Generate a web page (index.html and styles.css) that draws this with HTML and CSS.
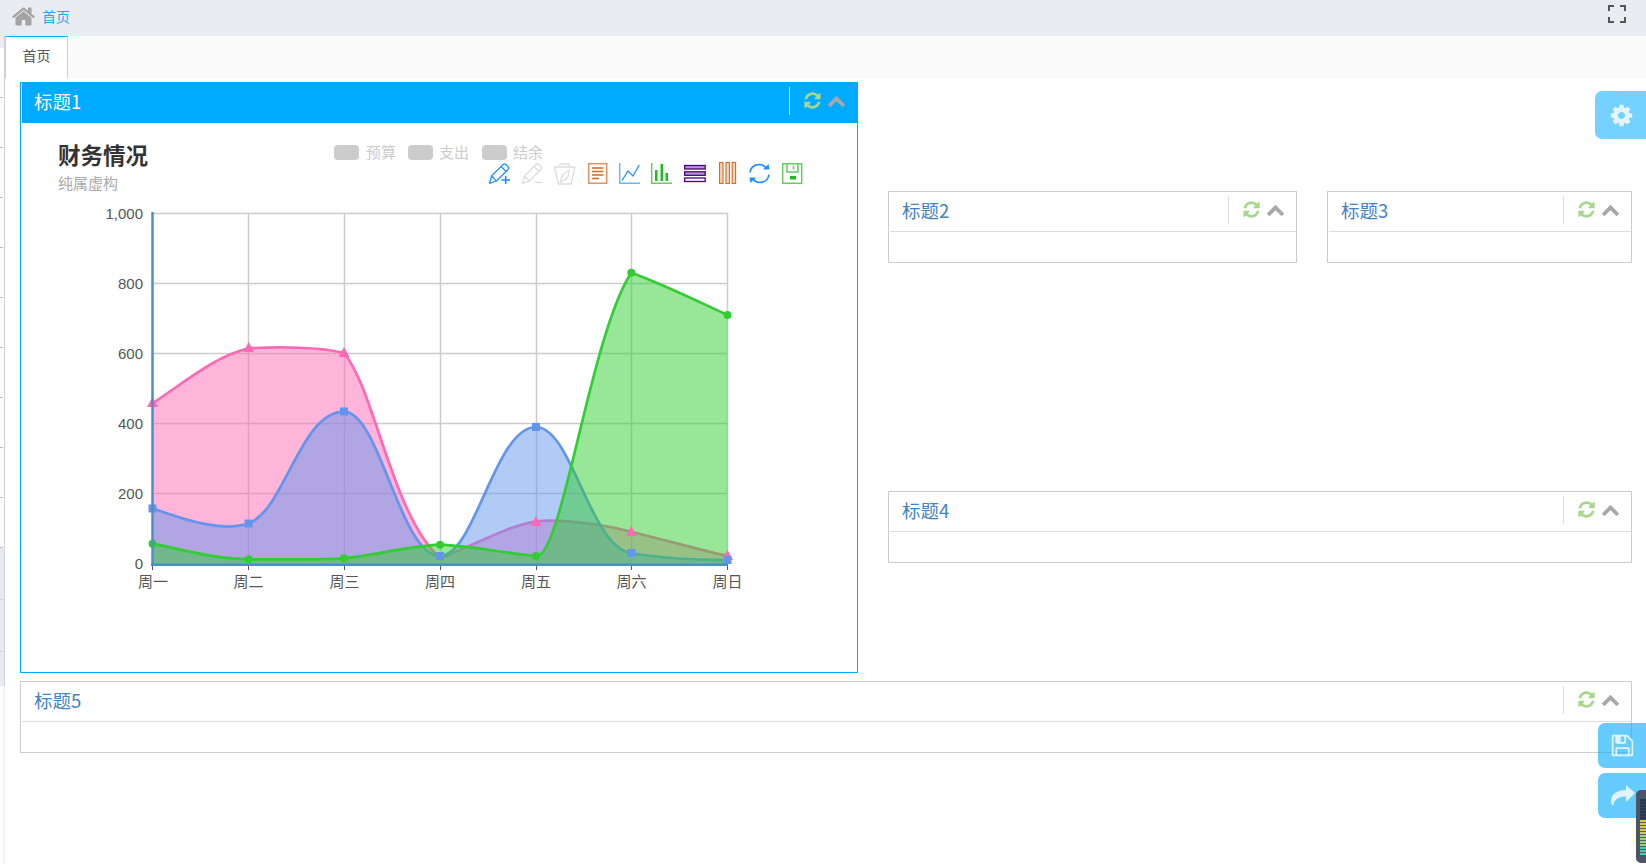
FILE: index.html
```html
<!DOCTYPE html>
<html lang="zh-CN">
<head>
  <meta charset="UTF-8">
  <title>首页</title>
  <link rel="stylesheet" href="styles.css">
</head>
<body>

<!-- sidebar sliver left of the page -->
<div class="strip">
  <div class="strip-top"></div>
  <div class="strip-ticks"></div>
  <div class="strip-menu"></div>
  <div class="strip-rest"></div>
</div>

<div class="page">
  <header class="topbar">
    <svg class="home-icon" viewBox="0 0 1792 1792"><path d="M1472 992v480q0 26-19 45t-45 19h-384v-384h-256v384h-384q-26 0-45-19t-19-45v-480q0-1 .5-3t.5-3l575-474 575 474q1 2 1 6zm223-69l-62 74q-8 9-21 11h-3q-13 0-21-7l-692-577-692 577q-12 8-24 7-13-2-21-11l-62-74q-8-10-7-23.500t11-21.500l719-599q32-26 76-26t76 26l244 204v-195q0-14 9-23t23-9h192q14 0 23 9t9 23v408l219 182q10 8 11 21.500t-7 23.500z"/></svg>
    <a class="crumb">首页</a>
    <svg class="full-icon" viewBox="0 0 18 18"><path d="M1 6V1H6M12 1H17V6M17 12V17H12M6 17H1V12"/></svg>
  </header>

  <nav class="tabs">
    <a class="tab">首页</a>
  </nav>

  <main class="content">
    <div class="row-top">
      <section class="panel panel-active">
        <div class="panel-head">
          <span class="panel-title">标题1</span>
          <div class="panel-tools">
            <svg class="tool-refresh" viewBox="0 0 1792 1792"><path d="M1639 1056q0 5-1 7-64 268-268 434.500t-478 166.500q-146 0-282.500-55t-243.500-157l-129 129q-19 19-45 19t-45-19-19-45v-448q0-26 19-45t45-19h448q26 0 45 19t19 45-19 45l-137 137q71 66 161 102t187 36q134 0 250-65t186-179q11-17 53-117 8-23 30-23h192q13 0 22.500 9.500t9.500 22.500zm25-800v448q0 26-19 45t-45 19h-448q-26 0-45-19t-19-45 19-45l138-138q-148-137-349-137-134 0-250 65t-186 179q-11 17-53 117-8 23-30 23h-199q-13 0-22.500-9.500t-9.500-22.500v-7q65-268 270-434.500t480-166.500q146 0 284 55.500t245 156.500l130-129q19-19 45-19t45 19 19 45z"/></svg>
            <svg class="tool-up" viewBox="0 0 1792 1792"><path d="M1683 1331l-166 165q-19 19-45 19t-45-19l-531-531-531 531q-19 19-45 19t-45-19l-166-165q-19-19-19-45.500t19-45.500l742-741q19-19 45-19t45 19l742 741q19 19 19 45.500t-19 45.500z"/></svg>
          </div>
        </div>
        <div class="chart-body">
          <!-- viewBox uses page coordinates, so the chart reads like the canvas it replaces -->
          <svg class="chart" viewBox="21 123 836 549">
            <text class="chart-title" x="58" y="164">财务情况</text>
            <text class="chart-sub" x="58" y="189">纯属虚构</text>

            <rect class="legend-key" x="334" y="145" width="25" height="15" rx="4"/>
            <text class="legend-label" x="366" y="158">预算</text>
            <rect class="legend-key" x="408" y="145" width="25" height="15" rx="4"/>
            <text class="legend-label" x="439" y="158">支出</text>
            <rect class="legend-key" x="482" y="145" width="25" height="15" rx="4"/>
            <text class="legend-label" x="513" y="158">结余</text>

            <!-- toolbox -->
            <g class="ico ico-blue" transform="translate(489 163)">
              <path d="M.7 20.300L2.500 13 14 1.500Q15.500.3 17 1.500L19 3.500Q20.300 5 19 6.500L7.500 18ZM12 3.500L17 8.500M2.500 13L7.500 18"/>
              <path class="ico-plus" d="M12.500 17H21M16.700 13V21"/>
            </g>
            <g class="ico ico-off" transform="translate(522 163)">
              <path d="M.7 20.300L2.500 13 14 1.500Q15.500.3 17 1.500L19 3.500Q20.300 5 19 6.500L7.500 18ZM12 3.500L17 8.500M2.500 13L7.500 18"/>
              <path d="M13 19.500H20"/>
            </g>
            <g class="ico ico-off" transform="translate(554 163)">
              <path d="M6 3V1H15V3M.5 4H21L17 21H4.500Z"/>
              <path d="M6.500 19Q7 11 15 7.500Q15.500 15 9 18Z"/>
            </g>
            <g transform="translate(588 163)">
              <rect class="ico-box-orange" x=".7" y=".7" width="18" height="19.500"/>
              <path class="ico-lines-orange" d="M4 5H15.500M4 8.500H15.500M4 12H15.500M4 15.500H11"/>
            </g>
            <g transform="translate(619 163)">
              <path class="ico-axis-blue" d="M.7 0V20.300H21"/>
              <path class="ico-stroke-blue" d="M3 17.500L9 8 14 13 20.300 2"/>
            </g>
            <g transform="translate(651 163)">
              <path class="ico-axis-green" d="M.7 0V20.300H21"/>
              <path class="ico-bars-green" d="M4 7H6.500V18H4ZM9.500 1H12V18H9.500ZM14.500 10H17V18H14.500Z"/>
            </g>
            <g class="ico-stack" transform="translate(684 165)">
              <rect x=".7" y=".5" width="20.500" height="3.500" class="ico-fill-purple"/>
              <rect x=".7" y="6.800" width="20.500" height="3.500" class="ico-fill-purple"/>
              <rect x=".7" y="13" width="20.500" height="3.500"/>
            </g>
            <g class="ico-tiled" transform="translate(719 162)">
              <rect x=".6" y=".5" width="3.400" height="21"/>
              <rect x="7" y=".5" width="3.400" height="21"/>
              <rect x="13.200" y=".5" width="3.400" height="21"/>
            </g>
            <g transform="translate(748 163)">
              <path class="ico-stroke-blue ico-thick" d="M2 9.500A9 9 0 0 1 18 5M21 11.500A9 9 0 0 1 5 16"/>
              <path class="ico-arrow-blue" d="M15 6.500L21.500 6.500 20.500 1ZM8 14.500L1.500 14.500 2.500 20Z"/>
            </g>
            <g transform="translate(782 163)">
              <path class="ico-axis-green" d="M.7.7H19.700V20.300H.7ZM5 .7V9H16V.7M11.500 2.500V6.500"/>
              <rect class="ico-bars-green" x="8" y="13" width="6" height="3.500"/>
            </g>

            <!-- grid -->
            <path class="grid" d="M152 213.500H727.500M152 283.500H727M152 353.500H727M152 423.500H727M152 493.500H727M248.500 213V564M344.500 213V564M440.500 213V564M536.500 213V564M631.500 213V564M727.500 213V564"/>

            <!-- areas: budget, spend, balance -->
            <path class="area area-pink" d="M152.500 403.300C185 382 215 356 248.700 348.300C280 346.500 320 347 344 353C375 390 392 515 440 558C470 548 505 526 536 521.700C555 518 600 524 631.300 531.700C665 540 700 550 727.500 556V564.500H152.500Z"/>
            <path class="line line-pink" d="M152.500 403.300C185 382 215 356 248.700 348.300C280 346.500 320 347 344 353C375 390 392 515 440 558C470 548 505 526 536 521.700C555 518 600 524 631.300 531.700C665 540 700 550 727.500 556"/>

            <path class="area area-blue" d="M152.500 508.300C190 522 225 532 248.700 523.300C285 510 300 412 344 411.700C380 412 400 556 440 556C475 556 495 427 536 427C572 427 590 548 631.300 553C660 558 700 560 727.500 560V564.500H152.500Z"/>
            <path class="line line-blue" d="M152.500 508.300C190 522 225 532 248.700 523.300C285 510 300 412 344 411.700C380 412 400 556 440 556C475 556 495 427 536 427C572 427 590 548 631.300 553C660 558 700 560 727.500 560"/>

            <path class="area area-green" d="M152.500 543.700C185 550 215 559 248.700 559.300C280 559.500 315 560 344 558.300C375 555 410 546 440 544.700C470 546 505 553 536 556C562 560 590 335 631.300 272.700C665 285 695 300 727.500 315V564.500H152.500Z"/>
            <path class="line line-green" d="M152.500 543.700C185 550 215 559 248.700 559.300C280 559.500 315 560 344 558.300C375 555 410 546 440 544.700C470 546 505 553 536 556C562 560 590 335 631.300 272.700C665 285 695 300 727.500 315"/>

            <!-- markers -->
            <g class="marks-pink">
              <path d="M152.500 397L158 407H147Z"/><path d="M248.700 342L254 352H243.500Z"/><path d="M344 347L349.500 357H338.500Z"/>
              <path d="M536 516L541.500 526H530.500Z"/><path d="M631.300 526L636.500 536H626Z"/><path d="M727.500 550L733 560H722Z"/>
            </g>
            <g class="marks-blue">
              <rect x="148.500" y="504.500" width="8" height="8"/><rect x="244.500" y="519.500" width="8" height="8"/><rect x="340" y="407.500" width="8" height="8"/>
              <rect x="436" y="552" width="8" height="8"/><rect x="532" y="423" width="8" height="8"/><rect x="627.500" y="549" width="8" height="8"/><rect x="723.500" y="556" width="8" height="8"/>
            </g>
            <g class="marks-green">
              <circle cx="152.500" cy="543.700" r="4"/><circle cx="248.700" cy="559.300" r="4"/><circle cx="344" cy="558.300" r="4"/>
              <circle cx="440" cy="544.700" r="4"/><circle cx="536" cy="556" r="4"/><circle cx="631.300" cy="272.700" r="4"/><circle cx="727.500" cy="315" r="4"/>
            </g>

            <!-- axes -->
            <path class="axis" d="M152.500 212V565.500M151 564.800H728"/>
            <path class="axis-tick" d="M152.500 566V570M248.500 566V570M344.500 566V570M440.500 566V570M536.500 566V570M631.500 566V570M727.500 566V570"/>

            <g class="y-labels">
              <text x="143" y="219">1,000</text>
              <text x="143" y="289">800</text>
              <text x="143" y="359">600</text>
              <text x="143" y="429">400</text>
              <text x="143" y="499">200</text>
              <text x="143" y="569">0</text>
            </g>
            <g class="x-labels">
              <text x="153" y="587">周一</text>
              <text x="248.500" y="587">周二</text>
              <text x="344.500" y="587">周三</text>
              <text x="440" y="587">周四</text>
              <text x="536" y="587">周五</text>
              <text x="631.500" y="587">周六</text>
              <text x="727.500" y="587">周日</text>
            </g>
          </svg>
        </div>
      </section>

      <div class="col-right">
        <div class="row-pair">
          <section class="panel panel-wide">
            <div class="panel-head">
              <span class="panel-title">标题2</span>
              <div class="panel-tools">
                <svg class="tool-refresh" viewBox="0 0 1792 1792"><path d="M1639 1056q0 5-1 7-64 268-268 434.500t-478 166.500q-146 0-282.500-55t-243.500-157l-129 129q-19 19-45 19t-45-19-19-45v-448q0-26 19-45t45-19h448q26 0 45 19t19 45-19 45l-137 137q71 66 161 102t187 36q134 0 250-65t186-179q11-17 53-117 8-23 30-23h192q13 0 22.500 9.500t9.500 22.500zm25-800v448q0 26-19 45t-45 19h-448q-26 0-45-19t-19-45 19-45l138-138q-148-137-349-137-134 0-250 65t-186 179q-11 17-53 117-8 23-30 23h-199q-13 0-22.500-9.500t-9.500-22.500v-7q65-268 270-434.500t480-166.500q146 0 284 55.500t245 156.500l130-129q19-19 45-19t45 19 19 45z"/></svg>
                <svg class="tool-up" viewBox="0 0 1792 1792"><path d="M1683 1331l-166 165q-19 19-45 19t-45-19l-531-531-531 531q-19 19-45 19t-45-19l-166-165q-19-19-19-45.500t19-45.500l742-741q19-19 45-19t45 19l742 741q19 19 19 45.500t-19 45.500z"/></svg>
              </div>
            </div>
            <div class="panel-body"></div>
          </section>
          <section class="panel panel-narrow">
            <div class="panel-head">
              <span class="panel-title">标题3</span>
              <div class="panel-tools">
                <svg class="tool-refresh" viewBox="0 0 1792 1792"><path d="M1639 1056q0 5-1 7-64 268-268 434.500t-478 166.500q-146 0-282.500-55t-243.500-157l-129 129q-19 19-45 19t-45-19-19-45v-448q0-26 19-45t45-19h448q26 0 45 19t19 45-19 45l-137 137q71 66 161 102t187 36q134 0 250-65t186-179q11-17 53-117 8-23 30-23h192q13 0 22.500 9.500t9.500 22.500zm25-800v448q0 26-19 45t-45 19h-448q-26 0-45-19t-19-45 19-45l138-138q-148-137-349-137-134 0-250 65t-186 179q-11 17-53 117-8 23-30 23h-199q-13 0-22.500-9.500t-9.500-22.500v-7q65-268 270-434.500t480-166.500q146 0 284 55.500t245 156.500l130-129q19-19 45-19t45 19 19 45z"/></svg>
                <svg class="tool-up" viewBox="0 0 1792 1792"><path d="M1683 1331l-166 165q-19 19-45 19t-45-19l-531-531-531 531q-19 19-45 19t-45-19l-166-165q-19-19-19-45.500t19-45.500l742-741q19-19 45-19t45 19l742 741q19 19 19 45.500t-19 45.500z"/></svg>
              </div>
            </div>
            <div class="panel-body"></div>
          </section>
        </div>
        <section class="panel panel-four">
          <div class="panel-head">
            <span class="panel-title">标题4</span>
            <div class="panel-tools">
              <svg class="tool-refresh" viewBox="0 0 1792 1792"><path d="M1639 1056q0 5-1 7-64 268-268 434.500t-478 166.500q-146 0-282.500-55t-243.500-157l-129 129q-19 19-45 19t-45-19-19-45v-448q0-26 19-45t45-19h448q26 0 45 19t19 45-19 45l-137 137q71 66 161 102t187 36q134 0 250-65t186-179q11-17 53-117 8-23 30-23h192q13 0 22.500 9.500t9.500 22.500zm25-800v448q0 26-19 45t-45 19h-448q-26 0-45-19t-19-45 19-45l138-138q-148-137-349-137-134 0-250 65t-186 179q-11 17-53 117-8 23-30 23h-199q-13 0-22.500-9.500t-9.500-22.500v-7q65-268 270-434.500t480-166.500q146 0 284 55.500t245 156.500l130-129q19-19 45-19t45 19 19 45z"/></svg>
              <svg class="tool-up" viewBox="0 0 1792 1792"><path d="M1683 1331l-166 165q-19 19-45 19t-45-19l-531-531-531 531q-19 19-45 19t-45-19l-166-165q-19-19-19-45.500t19-45.500l742-741q19-19 45-19t45 19l742 741q19 19 19 45.500t-19 45.500z"/></svg>
            </div>
          </div>
          <div class="panel-body"></div>
        </section>
      </div>
    </div>

    <section class="panel panel-five">
      <div class="panel-head">
        <span class="panel-title">标题5</span>
        <div class="panel-tools">
          <svg class="tool-refresh" viewBox="0 0 1792 1792"><path d="M1639 1056q0 5-1 7-64 268-268 434.500t-478 166.500q-146 0-282.500-55t-243.500-157l-129 129q-19 19-45 19t-45-19-19-45v-448q0-26 19-45t45-19h448q26 0 45 19t19 45-19 45l-137 137q71 66 161 102t187 36q134 0 250-65t186-179q11-17 53-117 8-23 30-23h192q13 0 22.500 9.500t9.500 22.500zm25-800v448q0 26-19 45t-45 19h-448q-26 0-45-19t-19-45 19-45l138-138q-148-137-349-137-134 0-250 65t-186 179q-11 17-53 117-8 23-30 23h-199q-13 0-22.500-9.500t-9.500-22.500v-7q65-268 270-434.500t480-166.500q146 0 284 55.500t245 156.500l130-129q19-19 45-19t45 19 19 45z"/></svg>
          <svg class="tool-up" viewBox="0 0 1792 1792"><path d="M1683 1331l-166 165q-19 19-45 19t-45-19l-531-531-531 531q-19 19-45 19t-45-19l-166-165q-19-19-19-45.500t19-45.500l742-741q19-19 45-19t45 19l742 741q19 19 19 45.500t-19 45.500z"/></svg>
        </div>
      </div>
      <div class="panel-body"></div>
    </section>
  </main>
</div>

<!-- floating buttons on the right edge -->
<button class="float-btn float-settings">
  <svg viewBox="0 0 1792 1792"><path d="M1152 896q0-106-75-181t-181-75-181 75-75 181 75 181 181 75 181-75 75-181zm512-109v222q0 12-8 23t-20 13l-185 28q-19 54-39 91 35 50 107 138 10 12 10 25t-9 23q-27 37-99 108t-94 71q-12 0-26-9l-138-108q-44 23-91 38-16 136-29 186-7 28-36 28h-222q-14 0-24.500-8.500t-11.500-21.500l-28-184q-49-16-90-37l-141 107q-10 9-25 9-14 0-25-11-126-114-165-168-7-10-7-23 0-12 8-23 15-21 51-66.500t54-70.500q-27-50-41-99l-183-27q-13-2-21-12.500t-8-23.500v-222q0-12 8-23t19-13l186-28q14-46 39-92-40-57-107-138-10-12-10-24 0-10 9-23 26-36 98.500-107.500t94.500-71.500q13 0 26 10l138 107q44-23 91-38 16-136 29-186 7-28 36-28h222q14 0 24.500 8.500t11.500 21.500l28 184q49 16 90 37l142-107q9-9 24-9 13 0 25 10 129 119 165 170 7 8 7 22 0 12-8 23-15 21-51 66.500t-54 70.500q26 50 41 98l183 28q13 2 21 12.500t8 23.500z"/></svg>
</button>
<button class="float-btn float-save">
  <svg viewBox="0 0 1792 1792"><path d="M512 1536h768v-384h-768v384zm896 0h128v-896q0-14-10-38.500t-20-34.500l-281-281q-10-10-34-20t-39-10v416q0 40-28 68t-68 28h-576q-40 0-68-28t-28-68v-416h-128v1280h128v-416q0-40 28-68t68-28h832q40 0 68 28t28 68v416zm-384-928v-320q0-13-9.500-22.500t-22.500-9.500h-192q-13 0-22.500 9.500t-9.500 22.500v320q0 13 9.500 22.500t22.500 9.500h192q13 0 22.500-9.500t9.500-22.500zm640 32v928q0 40-28 68t-68 28h-1344q-40 0-68-28t-28-68v-1344q0-40 28-68t68-28h928q40 0 88 20t76 48l280 280q28 28 48 76t20 88z"/></svg>
</button>
<button class="float-btn float-share">
  <svg viewBox="0 0 24 21"><path d="M24 8L15 0V5C6 5 0 9 0 16C0 18 1 20 2 21C3 15 6 12 15 11.500V17Z"/></svg>
</button>

<!-- dark widget cut off by the corner of the window -->
<div class="corner-widget"><div class="corner-meter"></div></div>

</body>
</html>
```

FILE: styles.css
```css
* {
  margin: 0;
  padding: 0;
  box-sizing: border-box;
}
body {
  display: flex;
  height: 100vh;
  overflow: hidden;
  background: #fff;
  font-family: "Noto Sans CJK SC", "Liberation Sans", sans-serif;
}

/* Sidebar sliver */
.strip {
  width: 5px;
  flex: none;
  display: flex;
  flex-direction: column;
}
.strip-top {
  height: 48px;
  background: #e9edf2;
  border-right: 1px solid #ccd2d8;
}
.strip-ticks {
  height: 500px;
  border-right: 1px solid #ccd2d8;
  background: repeating-linear-gradient(to bottom, transparent 0, transparent 49px, #bbb 49px, #bbb 50px) no-repeat 0 0 / 3px 100%;
}
.strip-menu {
  height: 138px;
  border-right: 1px solid #ccd2d8;
  background: repeating-linear-gradient(to bottom, #e6eaee 0, #e6eaee 51px, #d2d6da 51px, #d2d6da 52px);
}
.strip-rest {
  flex: 1;
  margin-left: 3px;
  background: #eef3f7;
}

.page {
  flex: 1;
  min-width: 0;
}

/* Top bar */
.topbar {
  height: 36px;
  margin-left: -1px;
  background: #e9edf2;
  display: flex;
  align-items: center;
  padding: 0 0 4px 7px;
}
.home-icon {
  width: 25px;
  height: 25px;
  fill: #a3a3a3;
}
.crumb {
  margin-left: 6px;
  font-size: 14px;
  color: #1ea7f5;
}
.full-icon {
  width: 18px;
  height: 18px;
  margin-left: auto;
  margin-right: 20px;
  margin-bottom: 4px;
  fill: none;
  stroke: #555;
  stroke-width: 2;
}

/* Tabs */
.tabs {
  height: 42px;
  background: #fafafa;
  display: flex;
}
.tab {
  width: 63px;
  border: 1px solid #c5d0dc;
  border-top-color: #00aaff;
  border-bottom: 0;
  background: #fff;
  color: #555;
  font-size: 14px;
  line-height: 36px;
  text-align: center;
}

/* Panels */
.content {
  padding: 4px 14px 0 15px;
}
.row-top {
  display: grid;
  grid-template-columns: 838px 1fr;
  column-gap: 30px;
}
.col-right {
  padding-top: 109px;
}
.row-pair {
  display: flex;
  gap: 30px;
}
.panel {
  border: 1px solid #ccc;
  background: #fff;
}
.panel-wide {
  width: 409px;
}
.panel-narrow {
  flex: 1;
}
.panel-four {
  margin-top: 228px;
}
.panel-five {
  margin-top: 8px;
}
.panel-head {
  height: 40px;
  margin-left: 1px;
  border-bottom: 1px solid #ddd;
  display: flex;
  justify-content: space-between;
  align-items: flex-start;
}
.panel-title {
  padding-left: 12px;
  font-size: 18.500px;
  line-height: 36px;
  color: #4584c0;
}
.panel-tools {
  width: 68px;
  height: 28px;
  margin-top: 4px;
  border-left: 1px solid #ddd;
  display: flex;
  align-items: flex-start;
  gap: 5px;
  padding: 4px 0 0 13px;
}
.tool-refresh {
  width: 19px;
  height: 19px;
  fill: #a9d68f;
}
.tool-up {
  width: 19px;
  height: 19px;
  fill: #a8a8a8;
}
.panel-body {
  height: 30px;
}

/* Active panel */
.panel-active {
  border-color: #00aaff;
  height: 591px;
}
.panel-active .panel-head {
  background: #00aaff;
  border-bottom-color: #00aaff;
}
.panel-active .panel-title {
  color: #fff;
}
.panel-active .panel-tools {
  border-left-color: #cfeeff;
}
.chart-body {
  height: 549px;
}
.chart {
  display: block;
  width: 836px;
  height: 549px;
}

/* Chart text */
.chart-title {
  font-size: 22.500px;
  font-weight: 700;
  fill: #333;
}
.chart-sub {
  font-size: 15px;
  fill: #aaa;
}
.legend-key {
  fill: #ccc;
}
.legend-label {
  font-size: 15px;
  fill: #ccc;
}
.y-labels text {
  font-family: "Liberation Sans", sans-serif;
  font-size: 15px;
  fill: #555;
  text-anchor: end;
}
.x-labels text {
  font-size: 15px;
  fill: #555;
  text-anchor: middle;
}

/* Chart lines */
.grid {
  fill: none;
  stroke: #ccc;
  stroke-width: 1.500;
}
.axis {
  fill: none;
  stroke: #4a90c8;
  stroke-width: 2.500;
}
.axis-tick {
  fill: none;
  stroke: #555;
  stroke-width: 1;
}
.area {
  stroke: none;
  opacity: .5;
}
.area-pink { fill: #ff69b4; }
.area-blue { fill: #6495ed; }
.area-green { fill: #32cd32; }
.line {
  fill: none;
  stroke-width: 2.700;
}
.line-pink { stroke: #ff69b4; }
.line-blue { stroke: #6495ed; }
.line-green { stroke: #32cd32; }
.marks-pink { fill: #ff69b4; }
.marks-blue { fill: #6495ed; }
.marks-green { fill: #32cd32; }

/* Toolbox icons */
.ico path {
  fill: none;
  stroke-width: 1.300;
}
.ico-blue path { stroke: #1e90ff; }
.ico-blue .ico-plus { stroke-width: 1.600; }
.ico-off path { stroke: #ddd; }
.ico-box-orange {
  fill: none;
  stroke: #e39060;
  stroke-width: 1.500;
}
.ico-lines-orange {
  fill: none;
  stroke: #d2691e;
  stroke-width: 1.300;
}
.ico-axis-blue {
  fill: none;
  stroke: #6fb4fb;
  stroke-width: 1.500;
}
.ico-stroke-blue {
  fill: none;
  stroke: #1e90ff;
  stroke-width: 1.300;
}
.ico-thick {
  stroke-width: 1.700;
}
.ico-arrow-blue {
  fill: #1e90ff;
}
.ico-axis-green {
  fill: none;
  stroke: #66cc66;
  stroke-width: 1.500;
}
.ico-bars-green {
  fill: #22bb22;
}
.ico-stack rect {
  fill: #fff;
  stroke: #4b0082;
  stroke-width: 1.300;
}
.ico-stack .ico-fill-purple {
  fill: #b39ad0;
}
.ico-tiled rect {
  fill: #f7d9c2;
  stroke: #d2691e;
  stroke-width: 1.100;
}

/* Floating buttons */
.float-btn {
  position: fixed;
  right: 0;
  border: none;
  border-radius: 7px 0 0 7px;
  background: rgba(0, 170, 255, .6);
  display: flex;
  align-items: center;
}
.float-btn svg {
  fill: rgba(255, 255, 255, .8);
}
.float-settings {
  top: 91px;
  width: 51px;
  height: 48px;
  background: rgba(0, 170, 255, .54);
  padding-left: 14px;
}
.float-settings svg {
  width: 25px;
  height: 25px;
}
.float-save {
  top: 723px;
  width: 48px;
  height: 45px;
  padding-left: 12px;
}
.float-save svg {
  width: 25px;
  height: 25px;
}
.float-share {
  top: 773px;
  width: 48px;
  height: 45px;
  padding-left: 13px;
}
.float-share svg {
  width: 24px;
  height: 21px;
}

/* Corner widget */
.corner-widget {
  position: fixed;
  right: 0;
  top: 790px;
  width: 10px;
  height: 73px;
  background: #4a5566;
  border-radius: 5px 0 0 5px;
  padding: 9px 0 8px 4px;
}
.corner-meter {
  height: 100%;
  background:
    repeating-linear-gradient(to bottom, transparent 0, transparent 2px, rgba(60, 70, 85, .8) 2px, rgba(60, 70, 85, .8) 3px),
    linear-gradient(to bottom, #27384f 0, #27384f 38%, #d8c84a 38%, #d8c84a 62%, #9ccf7a 62%, #9ccf7a 85%, #4ec8a8 85%);
}
```
